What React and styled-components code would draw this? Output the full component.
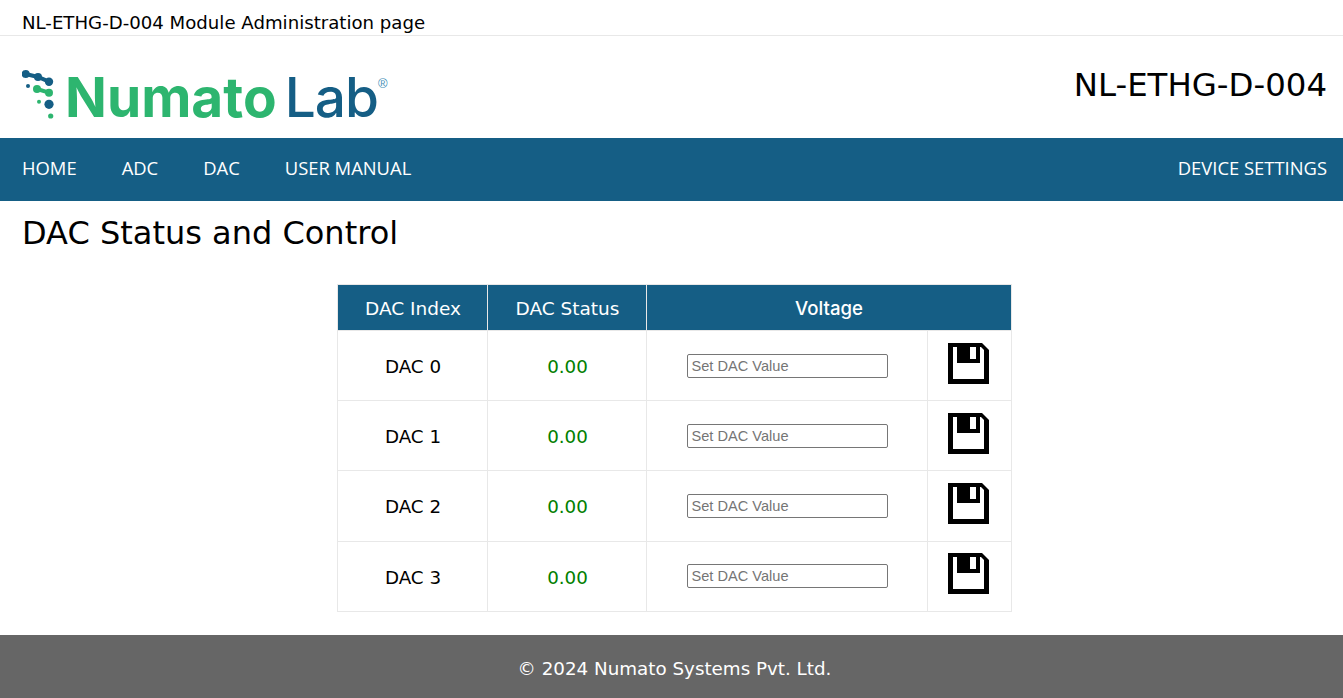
import React from "react";
import styled, { createGlobalStyle } from "styled-components";

const GlobalStyle = createGlobalStyle`
    html, body {
        margin: 0;
        padding: 0;
        background: #fff;
        font-family: "DejaVu Sans", Verdana, sans-serif;
    }
`;

const TopBar = styled.div`
    height: 35px;
    padding: 0 22px;
    display: flex;
    align-items: flex-end;
    font-size: 18.15px;
    line-height: 25px;
    color: #000;
    border-bottom: 1px solid #e8e8e8;
    box-sizing: content-box;
`;

const Header = styled.header`
    height: 102px;
    padding: 0 16px 0 22px;
    display: flex;
    justify-content: space-between;
    align-items: flex-start;
`;

const Logo = styled.div`
    display: flex;
    align-items: flex-start;
    margin-top: 33px;
    height: 52px;
`;

const LogoMark = styled.svg`
    width: 44px;
    height: 52px;
    flex: none;
`;

const LogoWord = styled.span`
    font-family: Inter, sans-serif;
    font-size: ${(p) => p.$size}px;
    font-weight: ${(p) => p.$weight};
    color: ${(p) => p.$color};
    letter-spacing: ${(p) => p.$spacing}px;
    line-height: 57px;
    margin-left: ${(p) => p.$gap}px;
`;

const LogoMarkR = styled.span`
    font-family: "Liberation Sans", sans-serif;
    font-size: 13px;
    line-height: 14px;
    color: #3f8fb5;
    margin: 8px 0 0 0;
`;

const DeviceName = styled.div`
    font-size: 32.4px;
    line-height: 40px;
    margin-top: 29px;
    font-weight: 400;
    color: #000;
`;

const Nav = styled.nav`
    height: 63px;
    padding: 0 16px 0 22px;
    background: #155e85;
    display: flex;
    align-items: center;
    gap: 45px;
`;

const NavLink = styled.a`
    font-family: "Open Sans", sans-serif;
    font-size: 18.4px;
    line-height: 60px;
    margin-bottom: 3px;
    color: #fff;
    text-decoration: none;
    margin-left: ${(p) => (p.$right ? "auto" : "0")};
`;

const Title = styled.h1`
    margin: 0;
    padding: 11px 22px 0;
    font-size: 32px;
    line-height: 42px;
    font-weight: 400;
    color: #000;
`;

const TableWrap = styled.div`
    padding: 30px 0 0 6px;
    display: flex;
    justify-content: center;
`;

const Table = styled.table`
    width: 673px;
    border-collapse: collapse;
    table-layout: fixed;
`;

const Th = styled.th`
    height: 44px;
    padding: 1px 0 0;
    background: #155e85;
    color: #fff;
    font-family: ${(p) => (p.$accent ? "Inter, sans-serif" : "inherit")};
    font-size: ${(p) => (p.$accent ? "18.6px" : "18.5px")};
    font-weight: ${(p) => (p.$accent ? 500 : 400)};
    border: 1px solid #e8e8e8;
    text-align: center;
`;

const Td = styled.td`
    height: 69.2px;
    padding: 0;
    font-size: 18.3px;
    text-align: center;
    color: #000;
    border: 1px solid #e8e8e8;
`;

const LabelCell = styled(Td)`
    height: 67.2px;
    padding-top: 2px;
    color: ${(p) => (p.$status ? "#008000" : "#000")};
`;

const DacInput = styled.input`
    width: 201px;
    height: 24px;
    box-sizing: border-box;
    padding: 1px 3px;
    font-family: "Liberation Sans", Arial, sans-serif;
    font-size: 14.6px;
    border: 1px solid #767676;
    border-radius: 2px;
    display: block;
    margin: 0 0 0 40px;

    &::placeholder {
        color: #757575;
    }
`;

const SaveButton = styled.button`
    display: block;
    margin: 0 auto 4px;
    padding: 0;
    border: 0;
    background: none;
    width: 42px;
    height: 42px;
    cursor: pointer;
`;

const Footer = styled.footer`
    margin-top: 23px;
    height: 63px;
    box-sizing: border-box;
    background: #666;
    color: #fff;
    font-size: 18.3px;
    display: flex;
    align-items: center;
    justify-content: center;
    padding: 4px 0 0 6px;
`;

const SaveIcon = () => (
    <svg width="42" height="42" viewBox="0 0 42 42">
        <path d="M0 0H34L41 7V41H0Z" fill="#000" />
        <path d="M5 4H33L36 7V36H5Z" fill="#fff" />
        <path d="M9 0H32V20H9Z" fill="#000" />
        <path d="M22 4H28V16H22Z" fill="#fff" />
    </svg>
);

const rows = [0, 1, 2, 3];

const App = () => {
    return (
        <>
            <GlobalStyle />
            <TopBar>NL-ETHG-D-004 Module Administration page</TopBar>
            <Header>
                <Logo>
                    <LogoMark viewBox="0 0 44 52">
                        <path d="M3.7 5L16 8L27 12.7" fill="none" stroke="#155e85" strokeWidth="4" />
                        <circle cx="3.7" cy="5" r="4" fill="#155e85" />
                        <circle cx="16" cy="8" r="4" fill="#155e85" />
                        <circle cx="27" cy="12.7" r="4.2" fill="#155e85" />
                        <circle cx="6" cy="17" r="2" fill="#155e85" />
                        <path d="M15 20L27 23.7" fill="none" stroke="#2db56f" strokeWidth="4" />
                        <circle cx="15" cy="20" r="4" fill="#2db56f" />
                        <circle cx="27" cy="23.7" r="4" fill="#2db56f" />
                        <circle cx="17" cy="32.7" r="2" fill="#2db56f" />
                        <circle cx="27" cy="35.3" r="4.6" fill="#155e85" />
                        <circle cx="28.7" cy="47" r="2.6" fill="#2db56f" />
                    </LogoMark>
                    <LogoWord $size={55} $weight={700} $color="#2db56f" $spacing={0} $gap={-1}>Numato</LogoWord>
                    <LogoWord $size={55} $weight={500} $color="#155e85" $spacing={-1} $gap={8}>Lab</LogoWord>
                    <LogoMarkR>®</LogoMarkR>
                </Logo>
                <DeviceName>NL-ETHG-D-004</DeviceName>
            </Header>
            <Nav>
                <NavLink href="#">HOME</NavLink>
                <NavLink href="#">ADC</NavLink>
                <NavLink href="#">DAC</NavLink>
                <NavLink href="#">USER MANUAL</NavLink>
                <NavLink href="#" $right>DEVICE SETTINGS</NavLink>
            </Nav>
            <Title>DAC Status and Control</Title>
            <TableWrap>
                <Table>
                    <colgroup>
                        <col style={{ width: 150 }} />
                        <col style={{ width: 159 }} />
                        <col style={{ width: 281 }} />
                        <col style={{ width: 83 }} />
                    </colgroup>
                    <thead>
                        <tr>
                            <Th>DAC Index</Th>
                            <Th>DAC Status</Th>
                            <Th colSpan={2} $accent>Voltage</Th>
                        </tr>
                    </thead>
                    <tbody>
                        {rows.map((i) => (
                            <tr key={i}>
                                <LabelCell>DAC {i}</LabelCell>
                                <LabelCell $status>0.00</LabelCell>
                                <Td><DacInput placeholder="Set DAC Value" /></Td>
                                <Td><SaveButton><SaveIcon /></SaveButton></Td>
                            </tr>
                        ))}
                    </tbody>
                </Table>
            </TableWrap>
            <Footer>© 2024 Numato Systems Pvt. Ltd.</Footer>
        </>
    );
};

export default App;
